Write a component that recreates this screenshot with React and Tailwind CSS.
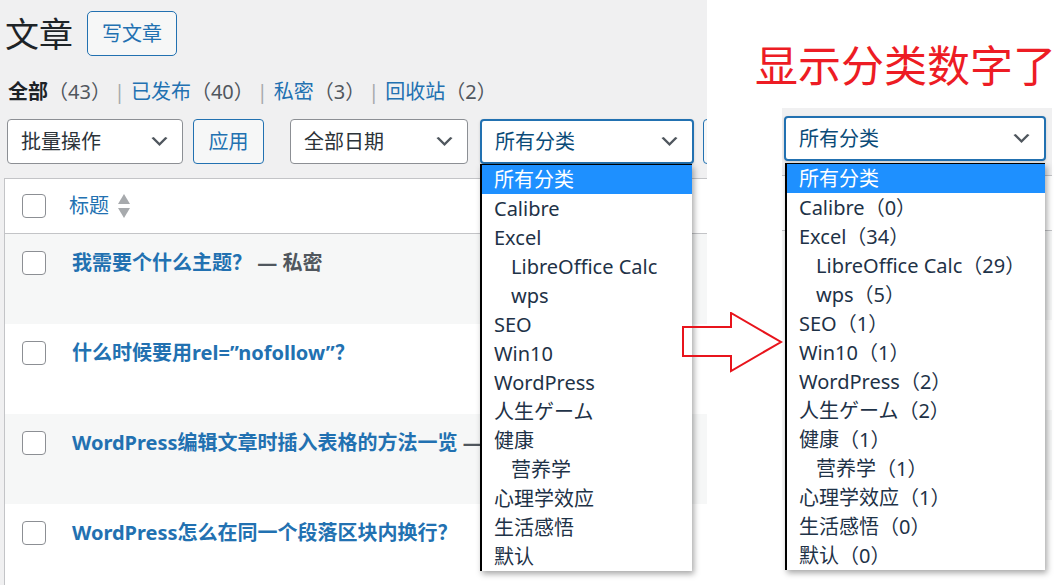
import React from 'react';

const FONT = "font-['Noto_Sans','Noto_Sans_CJK_SC',sans-serif]";

const categories = [
  { name: '所有分类', selected: true },
  { name: 'Calibre', count: 0 },
  { name: 'Excel', count: 34 },
  { name: 'LibreOffice Calc', count: 29, child: true },
  { name: 'wps', count: 5, child: true },
  { name: 'SEO', count: 1 },
  { name: 'Win10', count: 1 },
  { name: 'WordPress', count: 2 },
  { name: '人生ゲーム', count: 2 },
  { name: '健康', count: 1 },
  { name: '营养学', count: 1, child: true },
  { name: '心理学效应', count: 1 },
  { name: '生活感悟', count: 0 },
  { name: '默认', count: 0 },
];

const posts = [
  { title: '我需要个什么主题？', state: ' — 私密', alt: true },
  { title: '什么时候要用rel=”nofollow”？' },
  { title: 'WordPress编辑文章时插入表格的方法一览', state: ' —', alt: true },
  { title: 'WordPress怎么在同一个段落区块内换行？' },
];

function Chevron() {
  return (
    <svg width="23" height="23" viewBox="0 0 20 20" className="shrink-0">
      <path d="M5 6l5 5 5-5 2 1-7 7-7-7 2-1z" fill="#50575e" />
    </svg>
  );
}

function Select({ label, width, focused }) {
  return (
    <div
      className={`h-[45px] ${width} shrink-0 flex items-center justify-between bg-white rounded-[4px] pl-[13px] pr-[11px] text-[20px] ${
        focused
          ? 'border-2 border-[#2271b1] text-[#0a4b78] shadow-[0_1px_3px_rgba(0,0,0,0.15)]'
          : 'border border-[#8c8f94] text-[#2c3338]'
      }`}
    >
      <span>{label}</span>
      <Chevron />
    </div>
  );
}

function Checkbox() {
  return <span className="block w-[24px] h-[24px] shrink-0 rounded-[4px] border border-[#8c8f94] bg-white" />;
}

function Dropdown({ counts, className }) {
  return (
    <div className={`absolute bg-white border-t border-l-2 border-black shadow-[2px_3px_6px_rgba(0,0,0,0.35)] ${className}`}>
      {categories.map((c) => (
        <div
          key={c.name}
          className={`h-[29px] flex items-center text-[20px] leading-none whitespace-nowrap ${
            c.selected ? 'bg-[#1e90ff] text-white' : 'text-[#1e3247]'
          } ${c.child ? 'pl-[29px]' : 'pl-[12px]'}`}
        >
          {c.name}
          {counts && c.count !== undefined && <span>（{c.count}）</span>}
        </div>
      ))}
    </div>
  );
}

function PostRow({ post }) {
  return (
    <div className={`h-[90px] flex items-start pt-[17px] pl-[17px] ${post.alt ? 'bg-[#f6f7f7]' : 'bg-white'}`}>
      <Checkbox />
      <div className="ml-[26px] leading-[24px] text-[20px] font-bold whitespace-nowrap">
        <span className="text-[#2271b1]">{post.title}</span>
        {post.state && <span className="text-[#50575e]">{post.state}</span>}
      </div>
    </div>
  );
}

export default function App() {
  return (
    <div className={`w-[1060px] h-[585px] flex bg-white overflow-hidden relative ${FONT}`}>
      {/* left: wp admin posts list */}
      <div className="w-[707px] h-full shrink-0 bg-[#f0f0f1] relative overflow-hidden">
        <div className="flex items-center h-[45px] mt-[11px] pl-[5px]">
          <h1 className="text-[34px] leading-none text-[#1d2327]">文章</h1>
          <button className="ml-[14px] h-[45px] w-[90px] border border-[#2271b1] rounded-[5px] bg-[#f6f7f7] text-[#2271b1] text-[20px]">
            写文章
          </button>
        </div>

        <div className="mt-[22px] pl-[8px] flex items-center h-[28px] text-[20px] leading-none whitespace-nowrap">
          <span className="font-bold text-[#1d2327]">全部</span>
          <span className="text-[#50575e]">（43）</span>
          <span className="text-[#a7aaad] ml-[3px] mr-[6px]">|</span>
          <span className="text-[#2271b1]">已发布</span>
          <span className="text-[#50575e]">（40）</span>
          <span className="text-[#a7aaad] ml-[3px] mr-[6px]">|</span>
          <span className="text-[#2271b1]">私密</span>
          <span className="text-[#50575e]">（3）</span>
          <span className="text-[#a7aaad] ml-[3px] mr-[6px]">|</span>
          <span className="text-[#2271b1]">回收站</span>
          <span className="text-[#50575e]">（2）</span>
        </div>

        <div className="mt-[13px] pl-[7px] flex items-center h-[45px]">
          <Select label="批量操作" width="w-[176px]" />
          <button className="ml-[10px] w-[71px] h-[45px] shrink-0 border border-[#2271b1] rounded-[4px] bg-[#f6f7f7] text-[#2271b1] text-[20px]">
            应用
          </button>
          <div className="ml-[26px] shrink-0">
            <Select label="全部日期" width="w-[178px]" />
          </div>
          <div className="ml-[12px] shrink-0">
            <Select label="所有分类" width="w-[214px]" focused />
          </div>
          {/* filter button, cut off by the crop */}
          <div className="ml-[9px] w-[70px] h-[45px] shrink-0 border border-[#2271b1] rounded-[4px] bg-[#f6f7f7]" />
        </div>

        <div className="mt-[14px] ml-[4px] w-[760px] border-l border-t border-[#c3c4c7] bg-white">
          <div className="h-[55px] flex items-center pl-[17px] border-b border-[#c3c4c7]">
            <Checkbox />
            <span className="ml-[23px] text-[20px] text-[#2271b1]">标题</span>
            <svg width="14" height="26" viewBox="0 0 14 26" className="ml-[8px]">
              <path d="M7 1l6 10H1z" fill="#a7aaad" />
              <path d="M7 25l6-10H1z" fill="#a7aaad" />
            </svg>
          </div>
          {posts.map((p) => (
            <PostRow key={p.title} post={p} />
          ))}
        </div>

        <Dropdown className="left-[480px] top-[164px] w-[212px]" />
      </div>

      {/* right: annotation */}
      <div className="flex-1 flex flex-col">
        <div className="mt-[41px] ml-[48px] h-[50px] text-[43px] leading-[50px] text-[#ed1c24] whitespace-nowrap">
          显示分类数字了
        </div>
        <div className="mt-[17px] ml-[75px] w-[270px] flex-1 relative bg-white">
          <div className="h-[68px] bg-[#f0f0f1] pt-[8px] pl-[2px] border-b border-[#c3c4c7]">
            <Select label="所有分类" width="w-[262px]" focused />
          </div>
          <div className="h-[55px] border-b border-[#c3c4c7]" />
          <div className="h-[89px] bg-[#f6f7f7]" />
          <div className="h-[90px]" />
          <div className="h-[90px] bg-[#f6f7f7]" />
          <Dropdown counts className="left-[3px] top-[55px] w-[260px]" />
        </div>
      </div>

      <svg width="102" height="62" viewBox="0 0 102 62" className="absolute left-[682px] top-[312px]">
        <polygon points="1,15 49,15 49,1 99,30 49,59 49,44 1,44" fill="none" stroke="#e8141c" strokeWidth="2" />
      </svg>
    </div>
  );
}
